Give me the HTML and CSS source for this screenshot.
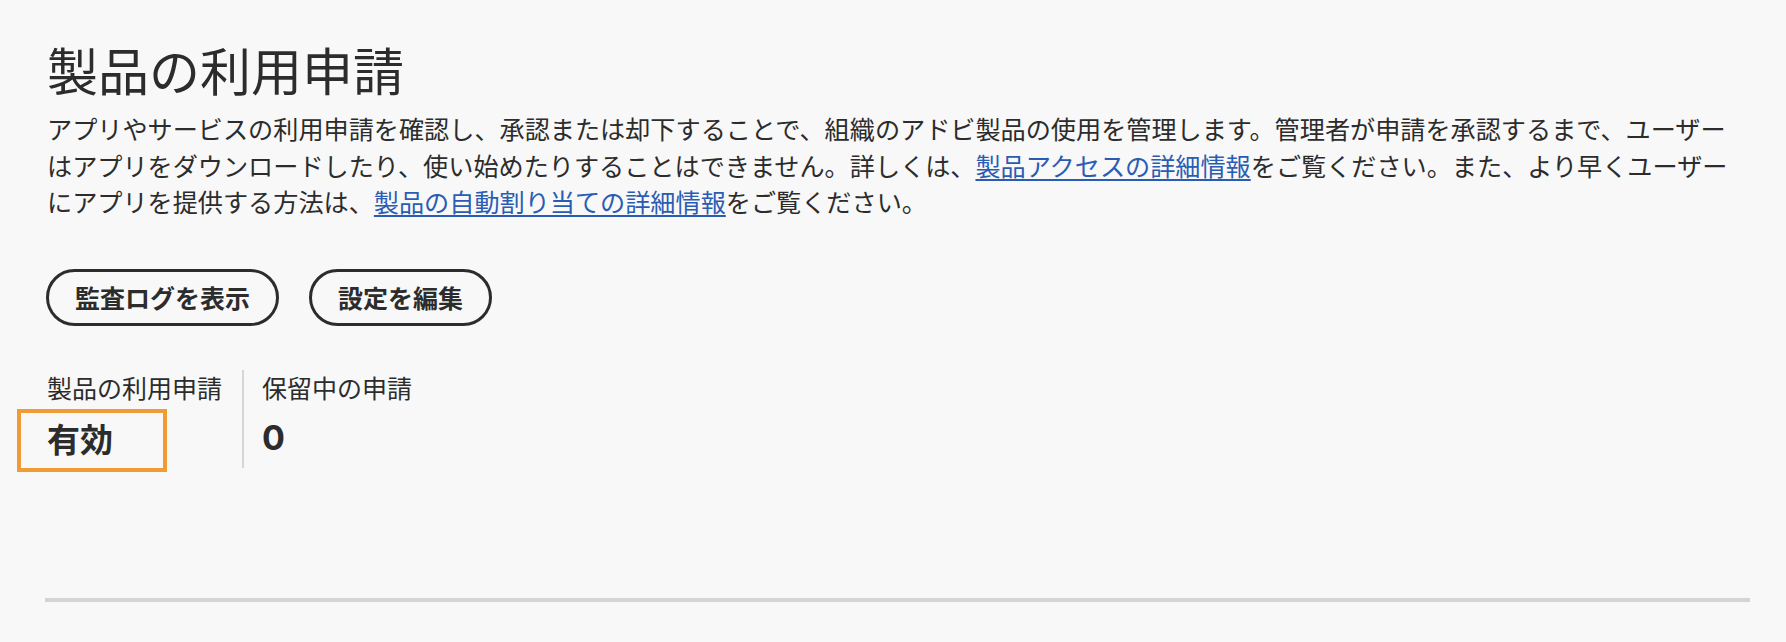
FILE: index.html
```html
<!DOCTYPE html>
<html lang="ja">
<head>
<meta charset="utf-8">
<title>製品の利用申請</title>
<link rel="stylesheet" href="styles.css">
</head>
<body>
<main class="page">
  <h1 class="title">製品の利用申請</h1>
  <p class="desc">アプリやサービスの利用申請を確認し、承認または却下することで、組織のアドビ製品の使用を管理します。管理者が申請を承認するまで、ユーザー<br>はアプリをダウンロードしたり、使い始めたりすることはできません。詳しくは、<a class="link" href="#">製品アクセスの詳細情報</a>をご覧ください。また、より早くユーザー<br>にアプリを提供する方法は、<a class="link" href="#">製品の自動割り当ての詳細情報</a>をご覧ください。</p>
  <div class="actions">
    <button class="btn" type="button">監査ログを表示</button>
    <button class="btn" type="button">設定を編集</button>
  </div>
  <div class="stats">
    <div class="stat stat-first">
      <div class="stat-label">製品の利用申請</div>
      <div class="stat-value">有効</div>
      <span class="highlight"></span>
    </div>
    <div class="stat stat-divided">
      <div class="stat-label">保留中の申請</div>
      <div class="stat-value stat-number">0</div>
    </div>
  </div>
  <hr class="rule">
</main>
</body>
</html>
```

FILE: styles.css
```css
html, body {
  margin: 0;
  padding: 0;
  background: #f8f8f8;
}

body {
  font-family: "Noto Sans CJK JP", "Noto Sans", sans-serif;
  color: #2c2c2c;
}

.page {
  padding: 39px 36px 0 47px;
}

.title {
  margin: 0;
  font-size: 51px;
  font-weight: 400;
  line-height: 61px;
  color: #2c2c2c;
}

.desc {
  margin: 10px 0 0 0;
  font-size: 25.15px;
  line-height: 36.5px;
  white-space: nowrap;
  color: #2c2c2c;
}

.link {
  color: #2b5cb4;
  text-decoration: underline;
  text-decoration-thickness: 1.5px;
  text-underline-offset: 3px;
}

.actions {
  display: flex;
  gap: 30px;
  margin-top: 49px;
  margin-left: -1px;
}

.btn {
  display: inline-flex;
  align-items: center;
  justify-content: center;
  height: 57px;
  padding: 0 26px;
  border: 3px solid #2c2c2c;
  border-radius: 999px;
  background: transparent;
  color: #2c2c2c;
  font-family: "Noto Sans CJK JP", "Noto Sans", sans-serif;
  font-size: 25px;
  font-weight: 700;
  line-height: 1;
}

.stats {
  display: flex;
  margin-top: 44px;
}

.stat {
  position: relative;
  padding-bottom: 10px;
}

.stat-first {
  padding-right: 20px;
}

.stat-divided {
  border-left: 2px solid #d6d6d6;
  padding-left: 18px;
}

.stat-label {
  font-size: 25px;
  line-height: 34px;
  color: #2c2c2c;
}

.stat-value {
  margin-top: 14px;
  font-size: 33px;
  font-weight: 700;
  line-height: 40px;
  color: #2c2c2c;
}

.stat-number {
  font-family: "Inter", "Noto Sans", sans-serif;
  font-size: 34px;
}

.highlight {
  position: absolute;
  left: -30px;
  top: 39px;
  width: 142px;
  height: 55px;
  border: 4px solid #f19b37;
  pointer-events: none;
}

.rule {
  margin: 130px 0 0 -2px;
  border: 0;
  height: 4px;
  background: #d4d4d4;
}
```
